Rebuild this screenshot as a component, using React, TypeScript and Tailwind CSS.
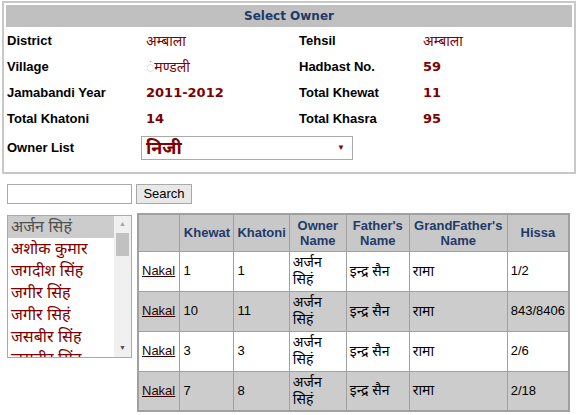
const owners = [
  "अर्जन सिहं",
  "अशोक कुमार",
  "जगदीश सिंह",
  "जगीर सिंह",
  "जगीर सिहं",
  "जसबीर सिंह",
  "जसबीर सिंह",
];

const rows = [
  { khewat: "1", khatoni: "1", hissa: "1/2" },
  { khewat: "10", khatoni: "11", hissa: "843/8406" },
  { khewat: "3", khatoni: "3", hissa: "2/6" },
  { khewat: "7", khatoni: "8", hissa: "2/18" },
];

const label = "font-bold text-[13px] text-black";
const hindi = "text-[14px] text-[#800000] pl-[5px]";
const num = "font-['DejaVu_Sans',sans-serif] font-bold text-[13px] text-[#800000] pl-[5px]";

function InfoPanel() {
  return (
    <div className="ml-[2px] mt-[1px] w-[574px] h-[173px] border-2 border-[#c8c8c8] p-[2px]">
      <div className="h-[22px] bg-[#c0c0c0] flex items-center justify-center font-['DejaVu_Sans',sans-serif] text-[12px] font-bold text-[#1f3a68]">
        Select Owner
      </div>
      <div className="grid grid-cols-[134px_158px_119px_1fr] grid-rows-[26px_26px_26px_26px_31px] items-center mt-px pl-px">
        <div className={label}>District</div>
        <div className={hindi}>अम्बाला</div>
        <div className={label}>Tehsil</div>
        <div className={hindi}>अम्बाला</div>

        <div className={label}>Village</div>
        <div className={hindi}>
          <span className="text-[#c0a0a0]">ं</span>मण्डली
        </div>
        <div className={label}>Hadbast No.</div>
        <div className={num}>59</div>

        <div className={label}>Jamabandi Year</div>
        <div className={num}>2011-2012</div>
        <div className={label}>Total Khewat</div>
        <div className={num}>11</div>

        <div className={label}>Total Khatoni</div>
        <div className={num}>14</div>
        <div className={label}>Total Khasra</div>
        <div className={num}>95</div>

        <div className={label}>Owner List</div>
        <div className="col-span-3">
          <div className="w-[212px] h-[24px] border border-[#a9a9a9] bg-white flex items-center justify-between pl-[4px] pr-[7px]">
            <span className="text-[18px] font-bold text-[#800000] leading-none">निजी</span>
            <span className="text-[8px] text-[#800000]">▼</span>
          </div>
        </div>
      </div>
    </div>
  );
}

function OwnerList() {
  return (
    <div className="w-[125px] h-[143px] border border-[#a9a9a9] bg-white flex overflow-hidden">
      <div className="flex-1">
        {owners.map((o, i) => (
          <div
            key={i}
            className={`h-[22px] pl-[3px] text-[16px] leading-[22px] whitespace-nowrap ${
              i === 0 ? "bg-[#cccccc] text-[#505050]" : "text-[#800000]"
            }`}
          >
            {o}
          </div>
        ))}
      </div>
      <div className="w-[17px] bg-[#f0f0f0] flex flex-col items-center">
        <div className="h-[17px] text-[7px] text-[#a3a3a3] flex items-center">▲</div>
        <div className="w-[13px] h-[23px] bg-[#c1c1c1]" />
        <div className="flex-1" />
        <div className="h-[17px] text-[7px] text-[#505050] flex items-center">▼</div>
      </div>
    </div>
  );
}

function ResultTable() {
  const th = "border border-[#a0a0a0] px-[3px] text-[13px] font-bold text-[#1f3a68] leading-[15px]";
  const td = "border border-[#a0a0a0] px-[3px] text-[13px] text-black";
  return (
    <table className="border-collapse border-2 border-[#a0a0a0] w-[433px]">
      <thead>
        <tr className="bg-[#c8c8c8] h-[37px]">
          <th className={`${th} w-[42px]`}></th>
          <th className={`${th} w-[54px]`}>Khewat</th>
          <th className={`${th} w-[55px]`}>Khatoni</th>
          <th className={`${th} w-[57px]`}>Owner Name</th>
          <th className={`${th} w-[63px]`}>Father's Name</th>
          <th className={`${th} w-[98px]`}>GrandFather's Name</th>
          <th className={th}>Hissa</th>
        </tr>
      </thead>
      <tbody>
        {rows.map((r, i) => (
          <tr key={i} className={`h-[40px] ${i % 2 ? "bg-[#cccccc]" : "bg-white"}`}>
            <td className={td}>
              <span className="underline text-[#330000]">Nakal</span>
            </td>
            <td className={td}>{r.khewat}</td>
            <td className={td}>{r.khatoni}</td>
            <td className={`${td} text-[14px] leading-[17px]`}>
              अर्जन
              <br />
              सिहं
            </td>
            <td className={`${td} text-[14px]`}>इन्द्र सैन</td>
            <td className={`${td} text-[14px]`}>रामा</td>
            <td className={td}>{r.hissa}</td>
          </tr>
        ))}
      </tbody>
    </table>
  );
}

export default function App() {
  return (
    <div className="w-[578px] h-[415px] bg-white font-['Liberation_Sans','Noto_Sans',sans-serif] overflow-hidden">
      <InfoPanel />
      <div className="flex gap-[4px] mt-[10px] ml-[7px]">
        <div className="w-[125px] h-[20px] border border-[#a9a9a9] bg-white" />
        <div className="w-[56px] h-[20px] border border-[#a9a9a9] bg-[#e8e8e8] text-[13px] text-black flex items-center justify-center">
          Search
        </div>
      </div>
      <div className="flex items-start gap-[5px] mt-[9px] ml-[7px]">
        <div className="mt-[2px]">
          <OwnerList />
        </div>
        <ResultTable />
      </div>
    </div>
  );
}
